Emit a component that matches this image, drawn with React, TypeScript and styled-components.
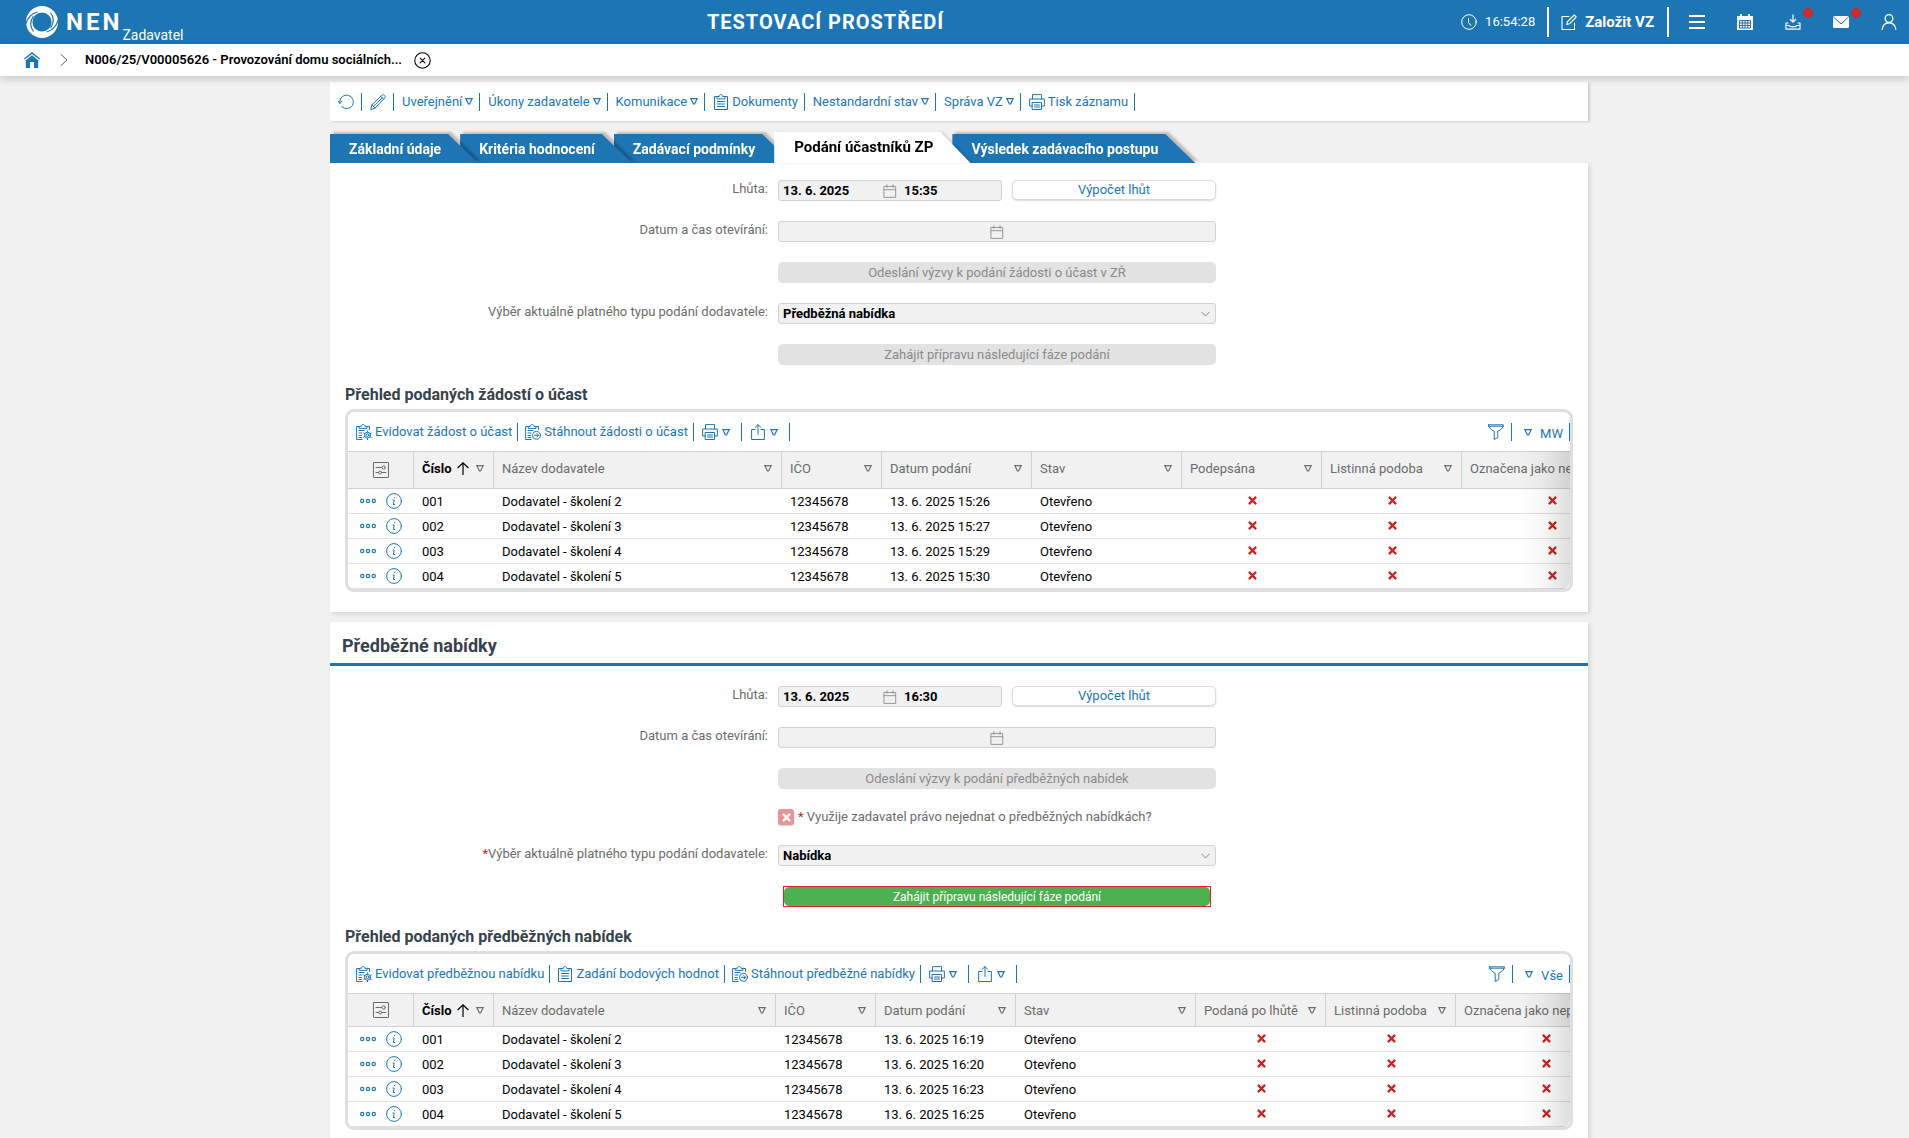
import React from "react";
import styled, { createGlobalStyle, css } from "styled-components";

const blue = "#1e75b4";
const grey = "#6b6b6b";

const GlobalStyle = createGlobalStyle`
  *, *::before, *::after { box-sizing: border-box; }
  body {
    margin: 0;
    background: #f1f1f1;
    color: #000;
    font-family: Roboto, "Open Sans", "Liberation Sans", sans-serif;
    font-size: 13px;
    line-height: 18px;
  }
  button, input, select { font: inherit; color: inherit; margin: 0; }
  button { background: none; border: 0; padding: 0; cursor: pointer; }
  svg { display: block; flex: none; }
  h1, h2, h3, ul, p { margin: 0; padding: 0; }
`;

/* ---------- icons ---------- */

type IconProps = { size?: number; sw?: number; children?: React.ReactNode };

const Icon = ({ size = 16, sw = 1, children }: IconProps) => (
  <svg
    width={size}
    height={size}
    viewBox="0 0 16 16"
    fill="none"
    stroke="currentColor"
    strokeWidth={sw}
    strokeLinecap="round"
    strokeLinejoin="round"
    aria-hidden="true"
  >
    {children}
  </svg>
);

const Logo = () => (
  <svg width="32" height="32" viewBox="0 0 32 32" aria-hidden="true" fill="none">
    <circle cx="16" cy="16" r="12.800" stroke="#fff" strokeWidth="6.400" />
    <path d="M32.500 13.500C30.500 20 27 24.500 20.500 26M24.500 6.500C28 11 28.500 16 24.500 22" stroke={blue} strokeWidth="1.200" />
    <path d="M-0.500 18.500C1.500 12 5 7.500 11.500 6M7.500 25.500C4 21 3.500 16 7.500 10" stroke={blue} strokeWidth="1.200" />
  </svg>
);

const ClockIcon = () => (
  <Icon>
    <circle cx="8" cy="8" r="7.300" />
    <path d="M7.500 4.500V8.500L10 11.500" />
  </Icon>
);
const EditIcon = () => (
  <Icon sw={1.1}>
    <path d="M8 2.500H1v13h12.500V9" />
    <path d="M5.800 10.500L6.600 7.500L13.200 1l2 2L8.700 9.700Z" />
  </Icon>
);
const MenuIcon = () => (
  <Icon sw={2}>
    <path d="M1 2h14M1 8h14M1 14h14" strokeLinecap="square" />
  </Icon>
);
const CalendarSolidIcon = () => (
  <svg width="16" height="16" viewBox="0 0 16 16" aria-hidden="true">
    <path d="M0 2h16v14H0Z" fill="#fff" />
    <path d="M3 0h2v4H3ZM11 0h2v4h-2Z" fill="#fff" />
    <path d="M2.500 6.500h11v7.500h-11Z" fill="none" stroke={blue} />
    <path d="M2.500 9h11M2.500 11.500h11M5.300 6.500V14M8 6.500V14M10.700 6.500V14" stroke={blue} />
  </svg>
);
const DownloadIcon = () => (
  <Icon sw={1.2}>
    <path d="M8 0.800V8M5.300 5.500L8 8.200L10.700 5.500" />
    <path d="M3 9H1v6.200h14V9h-2M1 11.500h3.500c0 1.800 7 1.800 7 0H15" />
  </Icon>
);
const MailIcon = () => (
  <svg width="16" height="16" viewBox="0 0 16 16" aria-hidden="true">
    <rect x="0" y="2" width="16" height="12" rx="1.500" fill="#fff" />
    <path d="M0.500 3L8 10L15.500 3" fill="none" stroke={blue} />
  </svg>
);
const UserIcon = () => (
  <Icon sw={1.3}>
    <circle cx="8" cy="4.500" r="3.800" />
    <path d="M1.200 15.500c0-9 13.600-9 13.600 0" />
  </Icon>
);
const HomeIcon = () => (
  <svg width="16" height="16" viewBox="0 0 16 16" fill={blue} aria-hidden="true">
    <path d="M8 0L16 6.400L15.200 7.600L8 2L0.800 7.600L0 6.400Z" />
    <path d="M8 3.300L14.200 8.200V16H10V10H6v6H1.800V8.200Z" />
  </svg>
);
const ChevronRight = () => (
  <Icon size={12}>
    <path d="M4 0.500L12 8L4 15.500" strokeWidth="1.300" />
  </Icon>
);
const CloseCircleIcon = () => (
  <Icon size={17}>
    <circle cx="8" cy="8" r="7.300" />
    <path d="M5.800 5.800L10.200 10.200M10.200 5.800L5.800 10.200" />
  </Icon>
);
const RefreshIcon = () => (
  <Icon>
    <path d="M1.800 9.500V8a6.800 6.800 0 1 1 2 4.700" />
    <path d="M0 7L1.900 9.300L4 7.200" />
  </Icon>
);
const PencilIcon = () => (
  <Icon>
    <path d="M0.700 15.300L2 10.800L12 1.200c1.600-1.400 4.200 1.200 2.800 2.800L5 14Z" />
    <path d="M2 10.800L5 14M10.800 2.500L13.600 5.300M3.500 12.300L12.200 3.900" />
  </Icon>
);
const ClipboardIcon = () => (
  <Icon>
    <path d="M4 2.500H1.500v13h13v-13H12" />
    <path d="M4 4.500v-2h2.200c0-2.600 3.600-2.600 3.600 0H12v2Z" />
    <path d="M4.500 7.500h7M4.500 10h7M4.500 12.500h7" />
  </Icon>
);
const ClipboardBase = () => (
  <>
    <path d="M3 2.500H0.600v13h5.500M11.500 2.500h2v3" />
    <path d="M3.200 4v-1.600h2c0-2.500 3.800-2.500 3.800 0h2V4Z" />
    <path d="M3 6.500h5M3 9h3M3 11.500h2.500M3 13.500h2.500" />
  </>
);
const ClipboardGearIcon = () => (
  <Icon>
    <ClipboardBase />
    <circle cx="11.500" cy="11.200" r="1.300" />
    <path d="M11.500 7v1.200M11.500 14.200v1.300M7.700 9l1.200.7M14 12.600l1.300.7M7.700 13.300l1.200-.7M14 9.800l1.300-.8" />
    <circle cx="11.500" cy="11.200" r="3" />
  </Icon>
);
const ClipboardArrowIcon = () => (
  <Icon>
    <ClipboardBase />
    <circle cx="11.500" cy="11.300" r="4" />
    <path d="M9.500 11.300h4M11.900 9.600l1.700 1.700l-1.700 1.700" />
  </Icon>
);
const PrinterIcon = () => (
  <Icon>
    <path d="M3.500 5V0.600h9V5M3.500 12H0.600V5h14.800v7h-2.900" />
    <path d="M3.500 8.500h9v7h-9ZM5.500 11h5M5.500 13h5" />
  </Icon>
);
const ShareIcon = () => (
  <Icon>
    <path d="M5 5.500H1.600v10h12.800v-10H11" />
    <path d="M8 10.500V0.700M5.300 3.300L8 0.600l2.700 2.700" />
  </Icon>
);
const FunnelIcon = () => (
  <Icon>
    <path d="M0.600 0.800h14.800c0 3-2.500 5-5.600 6.400v6.300l-3.600 2V7.200C3.100 5.800 0.600 3.800 0.600 0.800ZM0.700 2.200h14.600" />
  </Icon>
);
const CalendarIcon = () => (
  <Icon size={14}>
    <path d="M1.500 2.800h13v12.500h-13ZM1.500 6.500h13M4.500 0.800v3M11.500 0.800v3" />
  </Icon>
);
const ChevronDown = () => (
  <svg width="9" height="6" viewBox="0 0 9 6" fill="none" stroke="#888" aria-hidden="true">
    <path d="M0.500 0.800L4.500 5L8.500 0.800" />
  </svg>
);
const ColumnsIcon = () => (
  <Icon>
    <rect x="0.500" y="0.500" width="15" height="15" rx="0.500" />
    <path d="M3 5.500h5.500M3 10.500h2.500M8.500 10.500H13" />
    <circle cx="10.700" cy="5.500" r="1.700" />
    <circle cx="7.200" cy="10.500" r="1.500" />
  </Icon>
);
const DotsIcon = () => (
  <Icon sw={1.2}>
    <circle cx="2.200" cy="8" r="1.600" />
    <circle cx="8" cy="8" r="1.600" />
    <circle cx="13.800" cy="8" r="1.600" />
  </Icon>
);
const InfoIcon = () => (
  <Icon>
    <circle cx="8" cy="8" r="7.400" />
    <path d="M7 7h1.200L7.400 11.500h1.200M8.600 4.500v.3" />
  </Icon>
);
const SortUpIcon = () => (
  <svg width="12" height="13" viewBox="0 0 12 13" fill="none" stroke="currentColor" strokeWidth="1.200" aria-hidden="true">
    <path d="M6 13V1M0.600 6L6 0.800L11.400 6" />
  </svg>
);
const Triangle = () => (
  <svg width="8" height="7" viewBox="0 0 8 7" fill="none" stroke="currentColor" strokeWidth="1.200" aria-hidden="true">
    <path d="M0.900 0.700h6.200L4.600 6H3.400Z" />
  </svg>
);
const CrossIcon = ({ color = "#cb2424" }: { color?: string }) => (
  <svg width="9" height="9" viewBox="0 0 9 9" stroke={color} strokeWidth="2.200" role="img" aria-label="Ne">
    <path d="M0.900 0.900L8.100 8.100M8.100 0.900L0.900 8.100" />
  </svg>
);

/* ---------- page frame ---------- */

const Page = styled.div`
  display: flex;
  flex-direction: column;
  height: 100vh;
`;

const TopBar = styled.header`
  display: flex;
  align-items: center;
  flex: none;
  height: 44px;
  padding-left: 26px;
  background: ${blue};
  color: #fff;
`;

const Brand = styled.a`
  display: flex;
  align-items: center;
  color: inherit;
  text-decoration: none;
  width: 164px;
`;

const BrandName = styled.span`
  margin-left: 8px;
  font-size: 24px;
  line-height: 44px;
  font-weight: 700;
  letter-spacing: 3px;
`;

const BrandRole = styled.span`
  align-self: flex-end;
  padding-top: 10px;
  font-size: 14px;
  line-height: 18px;
`;

const EnvTitle = styled.h1`
  flex: 1;
  text-align: center;
  font-size: 20px;
  line-height: 24px;
  font-weight: 700;
  letter-spacing: 1px;
`;

const Clock = styled.div`
  display: flex;
  align-items: center;
  gap: 8px;
  padding-right: 12px;
`;

const CreateButton = styled.button`
  display: flex;
  align-items: center;
  gap: 8px;
  height: 30px;
  padding: 0 13px 0 12px;
  border: solid #fff;
  border-width: 0 2px;
  font-size: 15px;
  font-weight: 700;
`;

const TopIcons = styled.nav`
  display: flex;
  gap: 8px;
  padding-left: 8px;
`;

const TopIconButton = styled.button`
  position: relative;
  display: flex;
  align-items: center;
  justify-content: center;
  width: 40px;
  height: 44px;
`;

const Dot = styled.span`
  position: absolute;
  top: 8px;
  right: 0;
  width: 10px;
  height: 10px;
  border-radius: 50%;
  background: #c92a2a;
`;

const Breadcrumb = styled.nav`
  position: relative;
  z-index: 20;
  display: flex;
  align-items: center;
  flex: none;
  height: 32px;
  padding-left: 24px;
  background: #fff;
  box-shadow: 0 2px 10px rgba(0, 0, 0, 0.2);
  color: #555;
`;

const HomeLink = styled.a`
  margin-right: 18px;
`;

const RecordLink = styled.a`
  margin: 0 12px 0 15px;
  color: #000;
  font-weight: 600;
  text-decoration: none;
`;

const CloseButton = styled.button`
  color: #000;
`;

const Scroller = styled.main`
  flex: 1;
  overflow-y: auto;
  scrollbar-width: none;
  padding: 6px 0 0 9px;
`;

const Content = styled.div`
  width: 100%;
  max-width: 1258px;
  margin: 0 auto;
`;

const Card = styled.section`
  margin-bottom: 10px;
  padding-bottom: 20px;
  background: #fff;
  box-shadow: 2px 2px 4px rgba(0, 0, 0, 0.12);
`;

/* ---------- toolbars ---------- */

const ToolButton = styled.button<{ $kind?: "icon" | "wide" }>`
  display: flex;
  align-items: center;
  gap: ${(p) => (p.$kind ? 4 : 3)}px;
  height: 18px;
  padding: 0 ${(p) => (p.$kind === "wide" ? 11 : p.$kind === "icon" ? 7 : 6)}px 0 8px;
  border-right: 1px solid ${blue};
  color: ${blue};
  white-space: nowrap;
`;

const Toolbar = styled.div`
  display: flex;
  align-items: center;
  height: 39px;
  background: #fff;
  box-shadow: 2px 1px 2px rgba(0, 0, 0, 0.14);
`;

/* ---------- tabs ---------- */

const Tabs = styled.ul`
  display: flex;
  align-items: flex-end;
  height: 42px;
  list-style: none;
`;

const TabItem = styled.li<{ $order: number; $active?: boolean }>`
  position: relative;
  z-index: ${(p) => p.$order};
  margin-right: -18px;
  filter: ${(p) =>
    p.$active
      ? "drop-shadow(3px 0 1px rgba(0, 0, 0, 0.1))"
      : "drop-shadow(3px -2px 1px rgba(0, 0, 0, 0.22))"};
`;

const TabButton = styled.button<{ $active?: boolean }>`
  display: block;
  padding: 1px 37px 0 19px;
  height: 29px;
  background: ${blue};
  color: #fff;
  font-size: 14px;
  font-weight: 700;
  clip-path: polygon(0 0, calc(100% - 30px) 0, 100% 100%, 0 100%);
  ${(p) =>
    p.$active &&
    css`
      height: 31px;
      padding-left: 20px;
      padding-bottom: 2px;
      background: #fff;
      color: #000;
      font-size: 15px;
    `}
`;

/* ---------- form ---------- */

const SectionTitle = styled.h2`
  padding: 15px 12px 8px;
  border-bottom: 3px solid ${blue};
  color: #36424c;
  font-size: 18px;
  line-height: 18px;
  font-weight: 700;
`;

const Form = styled.form<{ $top: number }>`
  display: grid;
  grid-template-columns: 438fr 438fr 362fr;
  gap: 20px 10px;
  padding-top: ${(p) => p.$top}px;
`;

const Label = styled.label`
  grid-column: 1;
  text-align: right;
  color: ${grey};
`;

const Star = styled.span`
  color: #cb2424;
`;

const Field = styled.div`
  grid-column: 2;
  display: flex;
  gap: 10px;
`;

const DateBox = styled.div<{ $short?: boolean }>`
  display: flex;
  align-items: center;
  ${(p) => (p.$short ? "width: 224px;" : "flex: 1;")}
  height: 21px;
  border: 1px solid #d2d2d2;
  border-radius: 3px;
  background: #f1f1f1;
  color: #8a8a8a;
`;

const DateInput = styled.input`
  flex: 1;
  min-width: 0;
  width: 0;
  padding: 0 7px 0 4px;
  border: 0;
  background: none;
  color: #000;
  font-weight: 700;
  line-height: 19px;
`;

const TimeInput = styled(DateInput)`
  padding: 0 4px 0 7px;
`;

const PushButton = styled.button<{ $kind?: "plain" | "off" | "go" }>`
  flex: 1;
  height: 21px;
  border-radius: 5px;
  ${(p) => {
    switch (p.$kind) {
      case "off":
        return css`
          background: #e2e2e2;
          color: #8a8a8a;
          cursor: default;
        `;
      case "go":
        return css`
          background: #4caf50;
          color: #fff;
          font-size: 12px;
        `;
      default:
        return css`
          height: 20px;
          border: 1px solid #dcdcdc;
          background: #fff;
          box-shadow: 0 1px 2px rgba(0, 0, 0, 0.15);
          color: ${blue};
        `;
    }
  }}
`;

const Highlight = styled.div`
  display: flex;
  flex: 1;
  height: 21px;
  margin: 0 5px;
  border: 1px solid #ee1c25;
  ${PushButton} {
    height: 19px;
  }
`;

const SelectBox = styled.div`
  position: relative;
  flex: 1;
  svg {
    position: absolute;
    right: 6px;
    top: 8px;
    pointer-events: none;
  }
`;

const Select = styled.select`
  display: block;
  appearance: none;
  width: 100%;
  height: 21px;
  padding: 0 24px 0 4px;
  border: 1px solid #d2d2d2;
  border-radius: 3px;
  background: #f1f1f1;
  color: #000;
  font-weight: 700;
`;

const CheckLabel = styled.label`
  display: flex;
  align-items: center;
  gap: 4px;
  height: 16px;
  color: ${grey};
`;

const CheckBox = styled.span`
  position: relative;
  display: block;
  width: 16px;
  height: 16px;
  svg {
    position: absolute;
    left: 4px;
    top: 4px;
    pointer-events: none;
  }
`;

const CheckInput = styled.input`
  display: block;
  appearance: none;
  width: 16px;
  height: 16px;
  border-radius: 3px;
  background: #e69494;
  box-shadow: 0 1px 2px rgba(0, 0, 0, 0.2);
`;

/* ---------- grids ---------- */

const GridTitle = styled.h3`
  padding: 20px 15px 5px;
  color: #36424c;
  font-size: 16px;
  line-height: 19px;
  font-weight: 700;
`;

const GridFrame = styled.div`
  position: relative;
  margin: 0 15px;
  border: 3px solid #dddfe1;
  border-radius: 9px;
  overflow: hidden;
`;

const GridTools = styled.div`
  display: flex;
  align-items: center;
  height: 39px;
  padding: 1px 0 0 1px;
`;

const GridTool = styled(ToolButton)`
  padding: 0 5px 0 7px;
`;

const Spacer = styled.span`
  flex: 1;
`;

const ViewButton = styled(ToolButton)`
  gap: 8px;
  padding-left: 12px;
  span {
    padding-top: 4px;
  }
`;

const Table = styled.table`
  table-layout: fixed;
  border-collapse: separate;
  border-spacing: 0;
`;

const Th = styled.th<{ $main?: boolean }>`
  padding: 8px 9px 0 8px;
  border: solid #d0d1d2;
  border-width: 1px 1px 1px 0;
  background: #f1f1f1;
  color: ${(p) => (p.$main ? "#000" : grey)};
  font-weight: ${(p) => (p.$main ? 700 : 400)};
  text-align: left;
  vertical-align: top;
  white-space: nowrap;
`;

const ThConfig = styled(Th)`
  padding: 0;
  vertical-align: middle;
`;

const ThInner = styled.div`
  display: flex;
  align-items: center;
  justify-content: space-between;
  line-height: 17px;
  button {
    color: ${grey};
  }
`;

const SortLabel = styled.span`
  display: flex;
  align-items: center;
  gap: 5px;
`;

const IconButton = styled.button`
  display: block;
  margin: 0 auto;
  color: ${grey};
`;

const Td = styled.td`
  height: 25px;
  padding: 1px 8px 0;
  border-bottom: 1px solid #dddfe1;
  white-space: nowrap;
  svg {
    margin: 0 auto;
  }
`;

const ActionCell = styled(Td)`
  padding: 0 0 0 12px;
`;

const FlagCell = styled(Td)`
  padding: 0 8px 2px;
`;

const RowActions = styled.div`
  display: flex;
  gap: 10px;
  color: ${blue};
`;

const EdgeShade = styled.div`
  position: absolute;
  top: 39px;
  right: 0;
  bottom: 0;
  width: 50px;
  background: linear-gradient(to right, rgba(0, 0, 0, 0), rgba(0, 0, 0, 0.04) 50%, rgba(0, 0, 0, 0.13));
  border-bottom-right-radius: 8px;
  pointer-events: none;
`;

type Column = { title: string; width: number };
type Row = string[];

const actionsWidth = 66;

const MenuTool = ({ text }: { text: string }) => (
  <ToolButton type="button">
    {text}
    <Triangle />
  </ToolButton>
);

const DataGrid = ({
  title,
  tools,
  view,
  columns,
  rows,
  headHeight,
}: {
  title: string;
  tools: { icon: React.ReactNode; text: string }[];
  view: string;
  columns: Column[];
  rows: Row[];
  headHeight: number;
}) => (
  <>
    <GridTitle>{title}</GridTitle>
    <GridFrame>
      <GridTools>
        {tools.map((t) => (
          <GridTool type="button" key={t.text}>
            {t.icon}
            {t.text}
          </GridTool>
        ))}
        <ToolButton type="button" $kind="wide" aria-label="Tisk">
          <PrinterIcon />
          <Triangle />
        </ToolButton>
        <ToolButton type="button" $kind="wide" aria-label="Export">
          <ShareIcon />
          <Triangle />
        </ToolButton>
        <Spacer />
        <ToolButton type="button" $kind="icon" aria-label="Filtr">
          <FunnelIcon />
        </ToolButton>
        <ViewButton type="button">
          <Triangle />
          <span>{view}</span>
        </ViewButton>
      </GridTools>
      <Table style={{ width: columns.reduce((sum, c) => sum + c.width, actionsWidth) }}>
        <colgroup>
          <col style={{ width: actionsWidth }} />
          {columns.map((c) => (
            <col key={c.title} style={{ width: c.width }} />
          ))}
        </colgroup>
        <thead>
          <tr style={{ height: headHeight }}>
            <ThConfig>
              <IconButton type="button" aria-label="Nastavení sloupců">
                <ColumnsIcon />
              </IconButton>
            </ThConfig>
            {columns.map((c, i) => (
              <Th key={c.title} $main={i === 0}>
                <ThInner>
                  {i === 0 ? (
                    <SortLabel>
                      {c.title}
                      <SortUpIcon />
                    </SortLabel>
                  ) : (
                    c.title
                  )}
                  <button type="button" aria-label={"Filtr sloupce " + c.title}>
                    <Triangle />
                  </button>
                </ThInner>
              </Th>
            ))}
          </tr>
        </thead>
        <tbody>
          {rows.map((r) => (
            <tr key={r[0]}>
              <ActionCell>
                <RowActions>
                  <button type="button" aria-label="Další akce">
                    <DotsIcon />
                  </button>
                  <button type="button" aria-label="Detail">
                    <InfoIcon />
                  </button>
                </RowActions>
              </ActionCell>
              {r.map((v, i) => (
                <Td key={i}>{v}</Td>
              ))}
              {columns.slice(r.length).map((c) => (
                <FlagCell key={c.title}>
                  <CrossIcon />
                </FlagCell>
              ))}
            </tr>
          ))}
        </tbody>
      </Table>
      <EdgeShade />
    </GridFrame>
  </>
);

const makeRows = (times: string[]): Row[] =>
  times.map((t, i) => [`00${i + 1}`, `Dodavatel - školení ${i + 2}`, "12345678", `13. 6. 2025 ${t}`, "Otevřeno"]);

const requestColumns: Column[] = [
  { title: "Číslo", width: 80 },
  { title: "Název dodavatele", width: 288 },
  { title: "IČO", width: 100 },
  { title: "Datum podání", width: 150 },
  { title: "Stav", width: 150 },
  { title: "Podepsána", width: 140 },
  { title: "Listinná podoba", width: 140 },
  { title: "Označena jako neplatná", width: 180 },
];

const offerColumns: Column[] = [
  { title: "Číslo", width: 80 },
  { title: "Název dodavatele", width: 282 },
  { title: "IČO", width: 100 },
  { title: "Datum podání", width: 140 },
  { title: "Stav", width: 180 },
  { title: "Podaná po lhůtě", width: 130 },
  { title: "Listinná podoba", width: 130 },
  { title: "Označena jako neplatná", width: 180 },
];

const tabs = [
  "Základní údaje",
  "Kritéria hodnocení",
  "Zadávací podmínky",
  "Podání účastníků ZP",
  "Výsledek zadávacího postupu",
];
const activeTab = 3;

const DeadlineRows = ({ id, date, time }: { id: string; date: string; time: string }) => (
  <>
    <Label htmlFor={id + "-date"}>Lhůta:</Label>
    <Field>
      <DateBox $short>
        <DateInput id={id + "-date"} defaultValue={date} />
        <CalendarIcon />
        <TimeInput aria-label="Čas lhůty" defaultValue={time} />
      </DateBox>
      <PushButton type="button">Výpočet lhůt</PushButton>
    </Field>
    <Label htmlFor={id + "-open"}>Datum a čas otevírání:</Label>
    <Field>
      <DateBox>
        <DateInput id={id + "-open"} />
        <CalendarIcon />
        <TimeInput aria-label="Čas otevírání" />
      </DateBox>
    </Field>
  </>
);

const TypeSelect = ({ id, value, required }: { id: string; value: string; required?: boolean }) => (
  <>
    <Label htmlFor={id}>
      {required && <Star>*</Star>}Výběr aktuálně platného typu podání dodavatele:
    </Label>
    <Field>
      <SelectBox>
        <Select id={id} defaultValue={value}>
          <option>{value}</option>
        </Select>
        <ChevronDown />
      </SelectBox>
    </Field>
  </>
);

export default function App() {
  return (
    <Page>
      <GlobalStyle />
      <TopBar>
        <Brand href="#">
          <Logo />
          <BrandName>NEN</BrandName>
          <BrandRole>Zadavatel</BrandRole>
        </Brand>
        <EnvTitle>TESTOVACÍ PROSTŘEDÍ</EnvTitle>
        <Clock>
          <ClockIcon />
          16:54:28
        </Clock>
        <CreateButton type="button">
          <EditIcon />
          Založit VZ
        </CreateButton>
        <TopIcons>
          <TopIconButton type="button" aria-label="Menu">
            <MenuIcon />
          </TopIconButton>
          <TopIconButton type="button" aria-label="Kalendář">
            <CalendarSolidIcon />
          </TopIconButton>
          <TopIconButton type="button" aria-label="Stažené soubory">
            <DownloadIcon />
            <Dot />
          </TopIconButton>
          <TopIconButton type="button" aria-label="Zprávy">
            <MailIcon />
            <Dot />
          </TopIconButton>
          <TopIconButton type="button" aria-label="Uživatel">
            <UserIcon />
          </TopIconButton>
        </TopIcons>
      </TopBar>

      <Breadcrumb>
        <HomeLink href="#" aria-label="Domů">
          <HomeIcon />
        </HomeLink>
        <ChevronRight />
        <RecordLink href="#">N006/25/V00005626 - Provozování domu sociálních...</RecordLink>
        <CloseButton type="button" aria-label="Zavřít">
          <CloseCircleIcon />
        </CloseButton>
      </Breadcrumb>

      <Scroller>
        <Content>
          <Toolbar>
            <ToolButton type="button" $kind="icon" aria-label="Obnovit">
              <RefreshIcon />
            </ToolButton>
            <ToolButton type="button" $kind="icon" aria-label="Upravit">
              <PencilIcon />
            </ToolButton>
            <MenuTool text="Uveřejnění" />
            <MenuTool text="Úkony zadavatele" />
            <MenuTool text="Komunikace" />
            <ToolButton type="button">
              <ClipboardIcon />
              Dokumenty
            </ToolButton>
            <MenuTool text="Nestandardní stav" />
            <MenuTool text="Správa VZ" />
            <ToolButton type="button">
              <PrinterIcon />
              Tisk záznamu
            </ToolButton>
          </Toolbar>

          <Tabs>
            {tabs.map((t, i) => (
              <TabItem key={t} $active={i === activeTab} $order={i === activeTab ? 10 : tabs.length - i}>
                <TabButton type="button" $active={i === activeTab}>
                  {t}
                </TabButton>
              </TabItem>
            ))}
          </Tabs>

          <Card>
            <Form $top={17}>
              <DeadlineRows id="req" date="13. 6. 2025" time="15:35" />
              <Field>
                <PushButton type="button" $kind="off" disabled>
                  Odeslání výzvy k podání žádosti o účast v ZŘ
                </PushButton>
              </Field>
              <TypeSelect id="req-type" value="Předběžná nabídka" />
              <Field>
                <PushButton type="button" $kind="off" disabled>
                  Zahájit přípravu následující fáze podání
                </PushButton>
              </Field>
            </Form>
            <DataGrid
              title="Přehled podaných žádostí o účast"
              tools={[
                { icon: <ClipboardGearIcon />, text: "Evidovat žádost o účast" },
                { icon: <ClipboardArrowIcon />, text: "Stáhnout žádosti o účast" },
              ]}
              view="MW"
              columns={requestColumns}
              rows={makeRows(["15:26", "15:27", "15:29", "15:30"])}
              headHeight={38}
            />
          </Card>

          <Card>
            <SectionTitle>Předběžné nabídky</SectionTitle>
            <Form $top={20}>
              <DeadlineRows id="off" date="13. 6. 2025" time="16:30" />
              <Field>
                <PushButton type="button" $kind="off" disabled>
                  Odeslání výzvy k podání předběžných nabídek
                </PushButton>
              </Field>
              <Field>
                <CheckLabel>
                  <CheckBox>
                    <CheckInput type="checkbox" />
                    <CrossIcon color="#fff" />
                  </CheckBox>
                  <span>
                    <Star>* </Star>Využije zadavatel právo nejednat o předběžných nabídkách?
                  </span>
                </CheckLabel>
              </Field>
              <TypeSelect id="off-type" value="Nabídka" required />
              <Field>
                <Highlight>
                  <PushButton type="button" $kind="go">
                    Zahájit přípravu následující fáze podání
                  </PushButton>
                </Highlight>
              </Field>
            </Form>
            <DataGrid
              title="Přehled podaných předběžných nabídek"
              tools={[
                { icon: <ClipboardGearIcon />, text: "Evidovat předběžnou nabídku" },
                { icon: <ClipboardIcon />, text: "Zadání bodových hodnot" },
                { icon: <ClipboardArrowIcon />, text: "Stáhnout předběžné nabídky" },
              ]}
              view="Vše"
              columns={offerColumns}
              rows={makeRows(["16:19", "16:20", "16:23", "16:25"])}
              headHeight={34}
            />
          </Card>
        </Content>
      </Scroller>
    </Page>
  );
}
